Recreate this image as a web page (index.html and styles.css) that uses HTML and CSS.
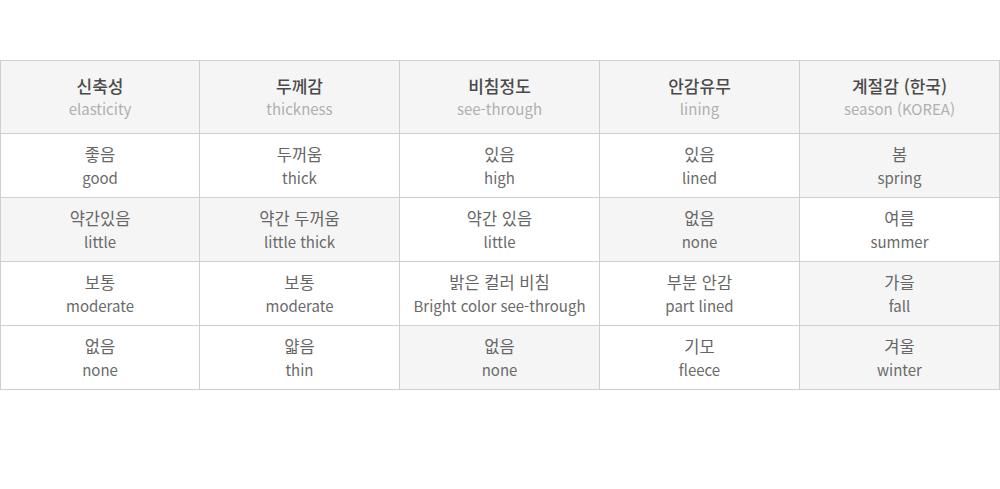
FILE: index.html
```html
<!DOCTYPE html>
<html lang="ko">
<head>
<meta charset="utf-8">
<link rel="stylesheet" href="styles.css">
</head>
<body>
<table class="size-table">
  <colgroup><col class="c1"><col><col><col><col></colgroup>
  <thead>
    <tr>
      <th><span class="ko">신축성</span><span class="en">elasticity</span></th>
      <th><span class="ko">두께감</span><span class="en">thickness</span></th>
      <th><span class="ko">비침정도</span><span class="en">see-through</span></th>
      <th><span class="ko">안감유무</span><span class="en">lining</span></th>
      <th><span class="ko">계절감 (한국)</span><span class="en">season (KOREA)</span></th>
    </tr>
  </thead>
  <tbody>
    <tr>
      <td><span class="ko">좋음</span><span class="en">good</span></td>
      <td><span class="ko">두꺼움</span><span class="en">thick</span></td>
      <td><span class="ko">있음</span><span class="en">high</span></td>
      <td><span class="ko">있음</span><span class="en">lined</span></td>
      <td class="on"><span class="ko">봄</span><span class="en">spring</span></td>
    </tr>
    <tr>
      <td class="on"><span class="ko">약간있음</span><span class="en">little</span></td>
      <td class="on"><span class="ko">약간 두꺼움</span><span class="en">little thick</span></td>
      <td><span class="ko">약간 있음</span><span class="en">little</span></td>
      <td class="on"><span class="ko">없음</span><span class="en">none</span></td>
      <td><span class="ko">여름</span><span class="en">summer</span></td>
    </tr>
    <tr>
      <td><span class="ko">보통</span><span class="en">moderate</span></td>
      <td><span class="ko">보통</span><span class="en">moderate</span></td>
      <td><span class="ko">밝은 컬러 비침</span><span class="en">Bright color see-through</span></td>
      <td><span class="ko">부분 안감</span><span class="en">part lined</span></td>
      <td class="on"><span class="ko">가을</span><span class="en">fall</span></td>
    </tr>
    <tr>
      <td><span class="ko">없음</span><span class="en">none</span></td>
      <td><span class="ko">얇음</span><span class="en">thin</span></td>
      <td class="on"><span class="ko">없음</span><span class="en">none</span></td>
      <td><span class="ko">기모</span><span class="en">fleece</span></td>
      <td class="on"><span class="ko">겨울</span><span class="en">winter</span></td>
    </tr>
  </tbody>
</table>
</body>
</html>
```

FILE: styles.css
```css
html, body {
  margin: 0;
  padding: 0;
  background: #fff;
}
body {
  padding-top: 60px;
  font-family: "Noto Sans CJK KR", "Noto Sans", sans-serif;
}
.size-table {
  width: 999px;
  border-collapse: collapse;
  table-layout: fixed;
}
.size-table col {
  width: 200px;
}
.size-table col.c1 {
  width: 199px;
}
.size-table th,
.size-table td {
  border: 1px solid #cfcfcf;
  text-align: center;
  vertical-align: middle;
  padding: 0;
  font-weight: normal;
}
.size-table th {
  height: 72px;
  background: #f5f5f5;
}
.size-table td {
  height: 63px;
}
.size-table td.on {
  background: #f5f5f5;
}
.ko, .en {
  display: block;
  line-height: 23px;
}
.size-table th .ko {
  font-size: 17px;
  font-weight: 500;
  color: #4a4a4a;
}
.size-table th .en {
  font-size: 15px;
  color: #b0b0b0;
}
.size-table td .ko {
  font-size: 16.5px;
  color: #666;
}
.size-table td .en {
  font-size: 15px;
  color: #6a6a6a;
}
```
